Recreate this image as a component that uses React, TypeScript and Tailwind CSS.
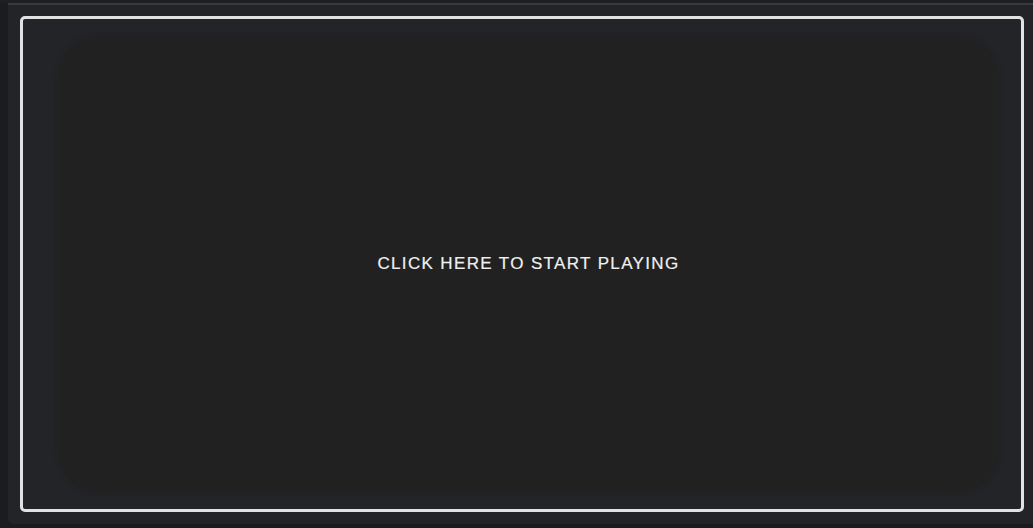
import React from 'react';

const App: React.FC = () => {
  return (
    <div className="w-[1033px] h-[528px] bg-[#1b1c1e] flex flex-col overflow-hidden" style={{ fontFamily: '"Liberation Sans", Arial, sans-serif' }}>
      <div className="h-[3px] bg-[#1e1f21]" />
      <div className="ml-[8px] h-[521px] bg-[#232427] border-t-2 border-[#3a3b3e] rounded-bl-[6px] pl-[12px] pr-[9px] pt-[11px] pb-[12px]">
        {/* game frame */}
        <div className="h-full border-[3px] border-[#e2e2e2] rounded-[5px] pl-[35px] pr-[22px] pt-[18px] pb-[17px]">
          <button className="w-full h-full rounded-[40px] bg-[#212121] shadow-[0_0_4px_0px_rgba(33,33,33,0.7)] flex items-center justify-center pb-[2px]">
            <span className="text-[#f0f0f0] text-[17px] font-medium tracking-[0.08em] uppercase [-webkit-text-stroke:0.2px_#f0f0f0]">Click here to start playing</span>
          </button>
        </div>
      </div>
    </div>
  );
};

export default App;
